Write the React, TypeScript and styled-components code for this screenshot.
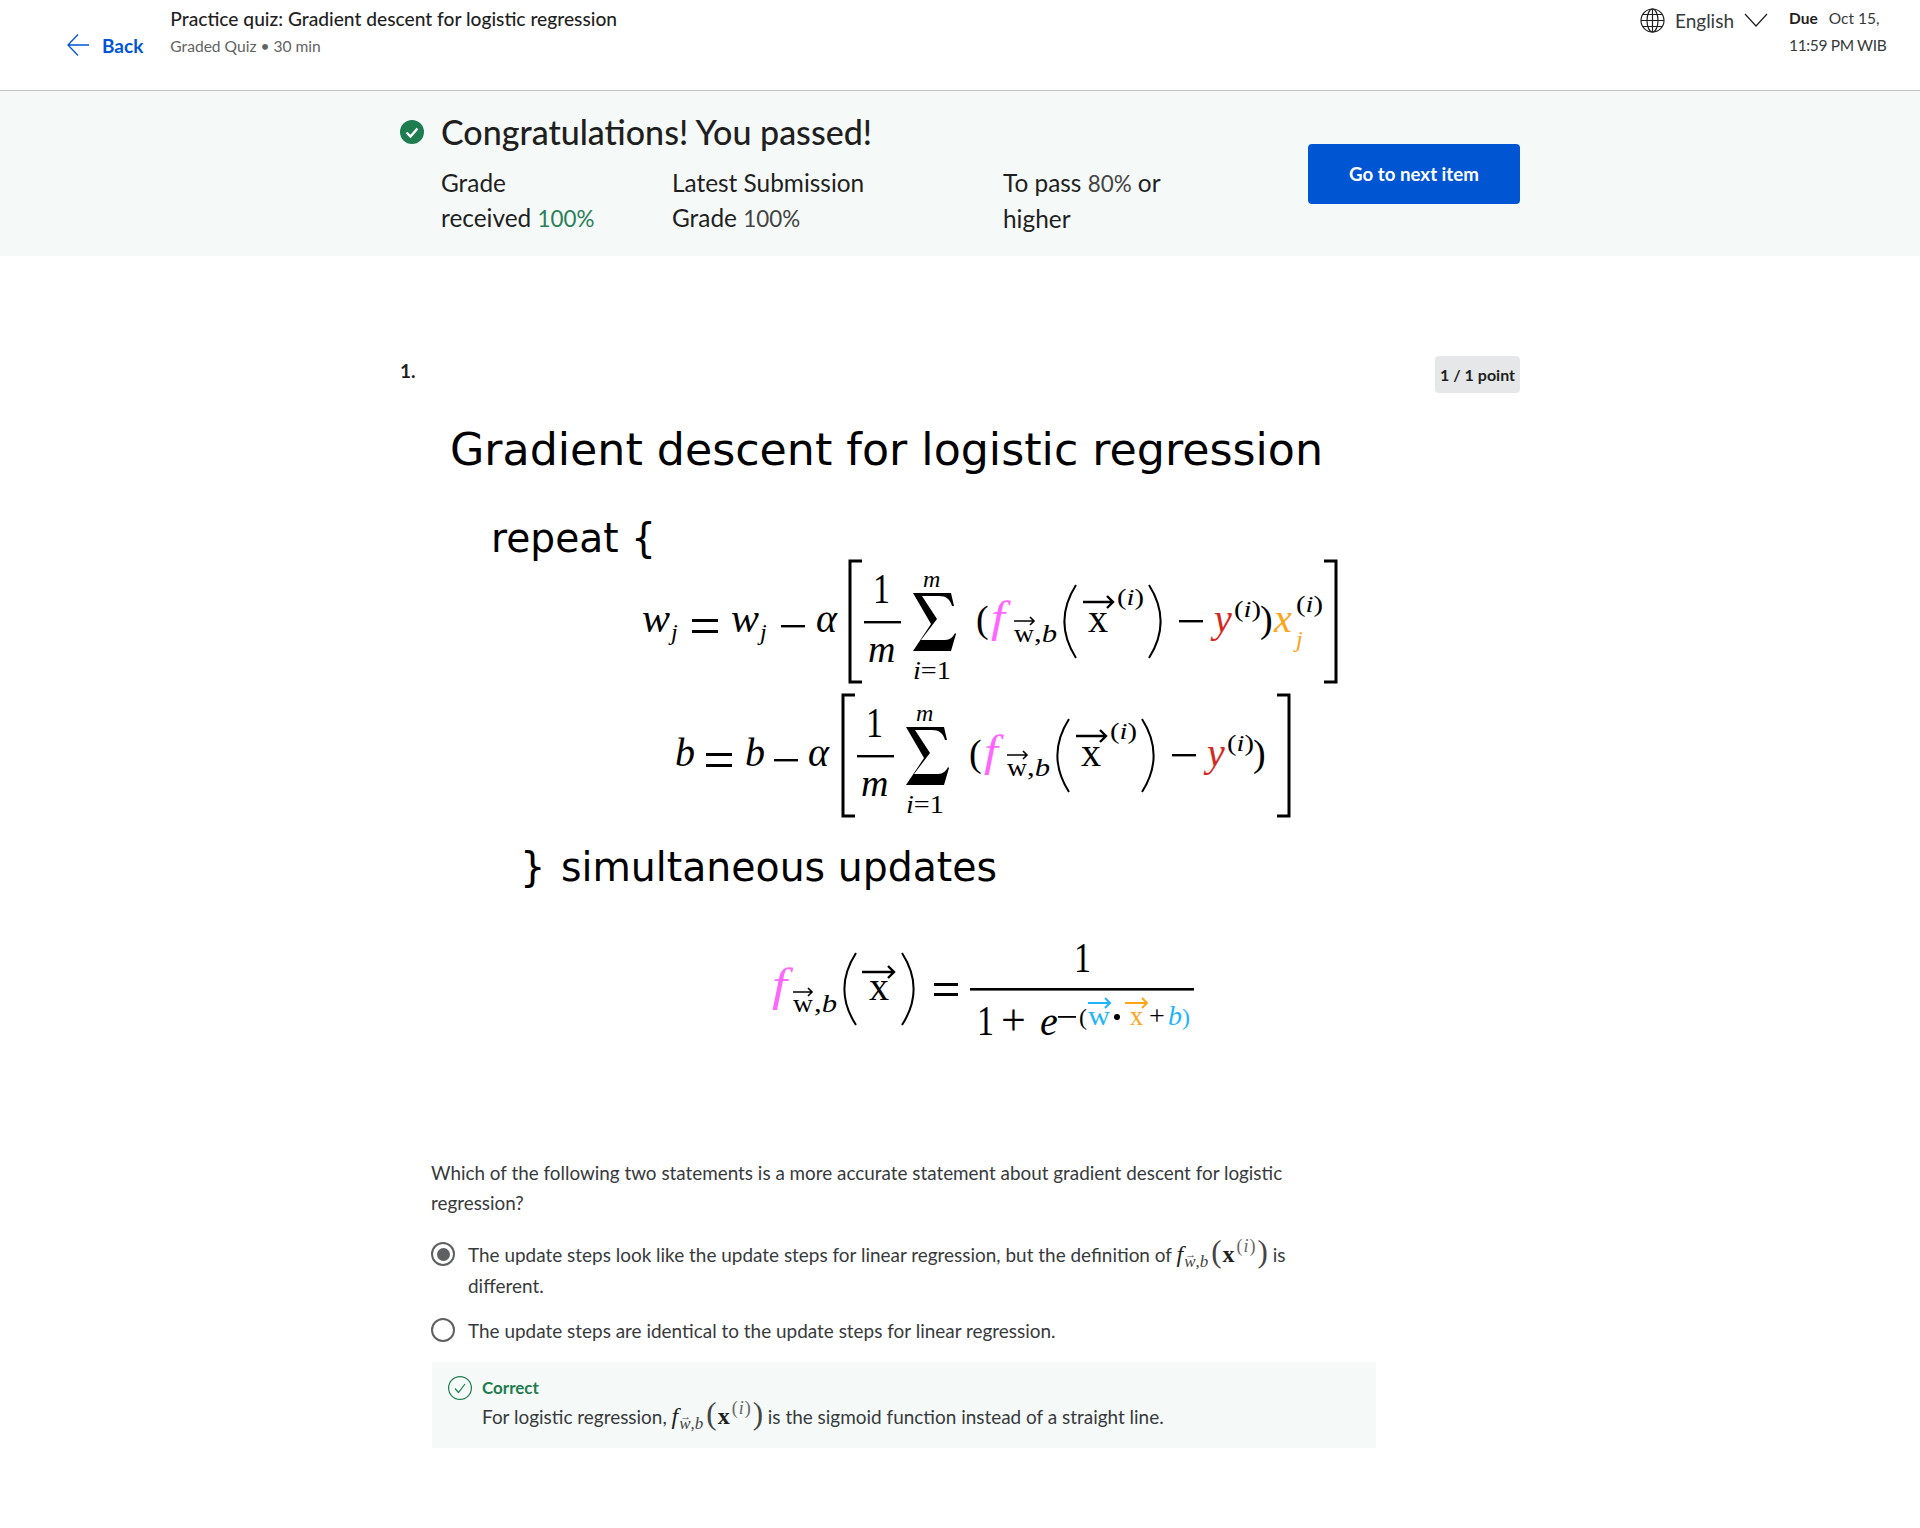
import React from "react";
import styled, { createGlobalStyle } from "styled-components";

const Global = createGlobalStyle`
  html, body { margin: 0; padding: 0; background: #fff; }
  body { font-family: "Lato", "Noto Sans", sans-serif; color: #1f1f1f; }
  * { box-sizing: border-box; }
`;

const Page = styled.div`
  width: 1920px;
  height: 1528px;
  overflow: hidden;
  background: #fff;
`;

const Header = styled.header`
  display: flex;
  height: 91px;
  border-bottom: 1px solid #c1c5c8;
  padding-left: 67px;
`;

const BackLink = styled.a`
  display: flex;
  align-items: center;
  gap: 13px;
  height: 24px;
  margin-top: 33px;
  color: #0056d2;
  font-size: 19px;
  font-weight: 700;
`;

const TitleBlock = styled.div`
  margin-left: 27px;
  flex: 1;
  padding-top: 7px;
`;

const Title = styled.div`
  font-size: 19.2px;
  font-weight: 500;
  line-height: 24px;
  color: #1f1f1f;
`;

const Sub = styled.div`
  font-size: 15.6px;
  line-height: 24px;
  margin-top: 3px;
  color: #636363;
`;

const LangPicker = styled.div`
  display: flex;
  align-items: center;
  height: 26px;
  margin: 7px 0 0 -2px;
  color: #373a3c;
  font-size: 19px;
`;

const LangName = styled.span`
  margin: 0 10px 0 10px;
`;

const Due = styled.div`
  width: 131px;
  margin-left: 21px;
  padding-top: 5px;
  font-size: 15.5px;
  line-height: 27px;
  white-space: nowrap;
  color: #373a3c;
`;

const DueLabel = styled.b`
  font-weight: 700;
  color: #1f1f1f;
  margin-right: 11px;
`;

const DueTime = styled.span`
  letter-spacing: -0.35px;
`;

const Banner = styled.section`
  height: 165px;
  background: #f5f9f8;
`;

const BannerInner = styled.div`
  width: 1120px;
  margin: 0 auto;
  display: flex;
  justify-content: space-between;
`;

const Pass = styled.div`
  padding-top: 21px;
`;

const PassHead = styled.h1`
  display: flex;
  align-items: center;
  gap: 17px;
  margin: 0;
  font-size: 34px;
  line-height: 40px;
  font-weight: 500;
  color: #1f1f1f;
`;

const Stats = styled.div`
  display: flex;
  margin-top: 13px;
  padding-left: 41px;
`;

const Stat = styled.div<{ $w: number }>`
  width: ${(p) => p.$w}px;
  font-size: 24.4px;
  line-height: 35px;
  white-space: nowrap;
  color: #1f1f1f;
`;

const Pct = styled.span<{ $good?: boolean }>`
  font-size: 22.4px;
  font-weight: 400;
  color: ${(p) => (p.$good ? "#2a8058" : "#444")};
`;

const NextButton = styled.button`
  width: 212px;
  height: 60px;
  margin-top: 53px;
  border: 0;
  border-radius: 4px;
  background: #0056d2;
  color: #fff;
  font: 700 18.7px "Lato", sans-serif;
`;

const Main = styled.main`
  width: 1120px;
  margin: 0 auto;
  padding-top: 100px;
`;

const QuestionHead = styled.div`
  display: flex;
  justify-content: space-between;
`;

const QNum = styled.div`
  font-size: 19px;
  font-weight: 700;
  line-height: 30px;
`;

const Points = styled.div`
  height: 37px;
  padding: 0 5px;
  display: flex;
  align-items: center;
  border-radius: 4px;
  background: #e5e7e8;
  font-size: 16px;
  font-weight: 700;
`;

const Figure = styled.svg`
  display: block;
  margin: 17px 0 0 40px;
`;

const MathText = styled.text<{ $italic?: boolean; $c?: string; $s?: number }>`
  font-family: "Liberation Serif", serif;
  font-style: ${(p) => (p.$italic ? "italic" : "normal")};
  font-size: ${(p) => p.$s ?? 40}px;
  fill: ${(p) => p.$c ?? "#000"};
`;

const SansText = styled.text`
  font-family: "DejaVu Sans", sans-serif;
  fill: #000;
`;

const Prose = styled.div`
  margin: 98px 0 0 31px;
  width: 945px;
  font-size: 18.95px;
  line-height: 30px;
  color: #373a3c;
`;

const Question = styled.div`
  width: 870px;
  font-size: 18.87px;
`;

const Options = styled.div`
  margin-top: 21px;
  display: flex;
  flex-direction: column;
  gap: 14px;
`;

const Option = styled.div`
  display: flex;
  gap: 13px;
`;

const OptionText = styled.span`
  width: 830px;
  line-height: 31px;
`;

const Radio = styled.span<{ $on?: boolean }>`
  flex: none;
  width: 24px;
  height: 24px;
  margin-top: 3px;
  border-radius: 50%;
  border: 2.5px solid #5e6062;
  display: flex;
  align-items: center;
  justify-content: center;
  &::after {
    content: "";
    width: 13px;
    height: 13px;
    border-radius: 50%;
    background: ${(p) => (p.$on ? "#5e6062" : "transparent")};
  }
`;

const Feedback = styled.div`
  margin: 16px 0 0 1px;
  width: 944px;
  height: 86px;
  background: #f5f9f8;
  padding: 14px 16px;
  display: flex;
  gap: 10px;
`;

const FeedbackBody = styled.div`
  color: #373a3c;
`;

const CorrectLabel = styled.div`
  color: #1d7c50;
  font-size: 17px;
  font-weight: 700;
  line-height: 24px;
`;

const FeedbackText = styled.div`
  line-height: 30px;
  margin-top: 2px;
`;

const Inline = styled.span`
  font-family: "Liberation Serif", serif;
  font-size: 24px;
  color: #1f1f1f;
  white-space: nowrap;
  line-height: 0;
`;

const InlineVar = styled.i`
  margin-right: 1px;
`;

const InlineSub = styled.span`
  font-size: 17px;
  color: #444;
  vertical-align: -5px;
  line-height: 0;
  margin-right: 3px;
`;

const InlineVec = styled.i`
  position: relative;
  display: inline-block;
  line-height: 0;
  &::before {
    content: "→";
    position: absolute;
    left: 1px;
    top: -8px;
    font-size: 11px;
    font-style: normal;
  }
`;

const InlineSup = styled.span`
  font-size: 18px;
  font-weight: 300;
  color: #666;
  vertical-align: 10px;
  line-height: 0;
  letter-spacing: 1px;
  margin: 0 1px;
`;

const InlineBold = styled.b`
  margin: 0 1px;
`;

const InlineParen = styled.span`
  font-size: 31px;
  font-weight: 300;
  color: #444;
`;

function InlineFormula() {
  return (
    <Inline>
      <InlineVar>f</InlineVar>
      <InlineSub>
        <InlineVec>w</InlineVec>,<i>b</i>
      </InlineSub>
      <InlineParen>(</InlineParen>
      <InlineBold>x</InlineBold>
      <InlineSup>
        (<i>i</i>)
      </InlineSup>
      <InlineParen>)</InlineParen>
    </Inline>
  );
}

const PINK = "#ff66ff";
const RED = "#d42a1e";
const ORANGE = "#ffa319";
const BLUE = "#1fb4ff";

function M(p: { x: number; y: number; s?: number; i?: boolean; c?: string; w?: number; children: React.ReactNode }) {
  return (
    <MathText
      x={p.x}
      y={p.y}
      $s={p.s}
      $italic={p.i}
      $c={p.c}
      {...(p.w ? { textLength: p.w, lengthAdjust: "spacingAndGlyphs" } : {})}
    >
      {p.children}
    </MathText>
  );
}

function Arrow({ x1, x2, y, c = "#000", sw = 2, head = 5 }: { x1: number; x2: number; y: number; c?: string; sw?: number; head?: number }) {
  return (
    <path
      d={`M${x1} ${y}H${x2}M${x2 - head} ${y - head}L${x2} ${y}L${x2 - head} ${y + head}`}
      fill="none"
      stroke={c}
      strokeWidth={sw}
    />
  );
}

function Paren({ x, y1, y2, dir, w = 15, sw = 2 }: { x: number; y1: number; y2: number; dir: 1 | -1; w?: number; sw?: number }) {
  const xEnd = dir === 1 ? x + w : x;
  const xMid = dir === 1 ? x : x + w;
  const my = (y1 + y2) / 2;
  return <path d={`M${xEnd} ${y1}Q${xMid - dir * w * 0.55} ${my} ${xEnd} ${y2}`} fill="none" stroke="#000" strokeWidth={sw} />;
}

function Sigma({ x, y }: { x: number; y: number }) {
  return (
    <path
      d={`M${x} ${y}H${x + 38}L${x + 41} ${y + 13}H${x + 39}C${x + 37} ${y + 6} ${x + 33} ${y + 3} ${x + 26} ${y + 3}H${x + 9}L${x + 24} ${y + 26}L${x + 8} ${y + 47}H${x + 32}C${x + 37} ${y + 47} ${x + 40} ${y + 44} ${x + 42} ${y + 40}L${x + 43} ${y + 41}L${x + 38} ${y + 58}H${x}L${x + 18} ${y + 31}Z`}
      fill="#000"
    />
  );
}

function Bracket({ x, y1, y2, dir }: { x: number; y1: number; y2: number; dir: 1 | -1 }) {
  const w = 12 * dir;
  return <path d={`M${x + w} ${y1}H${x}V${y2}H${x + w}`} fill="none" stroke="#000" strokeWidth={3} />;
}

/* the summation block shared by both update rules; dx/dy shift it from the first rule */
function SumBody({ dx, dy }: { dx: number; dy: number }) {
  const X = (v: number) => v + dx;
  const Y = (v: number) => v + dy;
  return (
    <>
      <M x={X(873)} y={Y(603)} s={42} w={17}>1</M>
      <rect x={X(864)} y={Y(621)} width={37} height={2.4} fill="#000" />
      <M x={X(868)} y={Y(662)} i s={38}>m</M>
      <Sigma x={X(913)} y={Y(593)} />
      <M x={X(923)} y={Y(587)} i s={24}>m</M>
      <M x={X(913)} y={Y(679)} s={26} w={38}>
        <tspan fontStyle="italic">i</tspan>=1
      </M>
      <M x={X(976)} y={Y(632)} s={38}>(</M>
      <M x={X(991)} y={Y(632)} i c={PINK} s={44} w={14}>f</M>
      <Arrow x1={X(1014)} x2={X(1034)} y={Y(621)} sw={1.6} head={4} />
      <M x={X(1014)} y={Y(642)} s={26} w={20}>w</M>
      <M x={X(1034)} y={Y(642)} s={26} w={23}>
        ,<tspan fontStyle="italic">b</tspan>
      </M>
      <Paren x={X(1061)} y1={Y(585)} y2={Y(658)} dir={1} />
      <Arrow x1={X(1083)} x2={X(1113)} y={Y(602)} sw={2.4} head={6} />
      <M x={X(1088)} y={Y(632)} s={40}>x</M>
      <M x={X(1117)} y={Y(605)} s={24} w={27}>
        (<tspan fontStyle="italic">i</tspan>)
      </M>
      <Paren x={X(1149)} y1={Y(585)} y2={Y(658)} dir={-1} />
      <rect x={X(1179)} y={Y(620)} width={24} height={2.4} fill="#000" />
      <M x={X(1214)} y={Y(632)} i c={RED} s={40}>y</M>
      <M x={X(1234)} y={Y(617)} s={24} w={27}>
        (<tspan fontStyle="italic">i</tspan>)
      </M>
      <M x={X(1260)} y={Y(632)} s={38}>)</M>
    </>
  );
}

function Equations() {
  return (
    <Figure width={960} height={650} viewBox="440 410 960 650" role="img" aria-label="Gradient descent for logistic regression">
      <SansText x={450} y={465} fontSize={44} textLength={873} lengthAdjust="spacingAndGlyphs">
        Gradient descent for logistic regression
      </SansText>
      <SansText x={491} y={552} fontSize={40} textLength={165} lengthAdjust="spacingAndGlyphs">
        repeat {"{"}
      </SansText>

      <M x={642} y={632} i s={42}>w</M>
      <M x={671} y={640} i s={24}>j</M>
      <rect x={692} y={619} width={26} height={3} fill="#000" />
      <rect x={692} y={630} width={26} height={3} fill="#000" />
      <M x={731} y={632} i s={42}>w</M>
      <M x={760} y={640} i s={24}>j</M>
      <rect x={781} y={625} width={24} height={2.4} fill="#000" />
      <M x={816} y={632} i s={40}>α</M>
      <Bracket x={850} y1={561} y2={682} dir={1} />
      <SumBody dx={0} dy={0} />
      <M x={1274} y={632} i c={ORANGE} s={40}>x</M>
      <M x={1296} y={612} s={24} w={27}>
        (<tspan fontStyle="italic">i</tspan>)
      </M>
      <M x={1296} y={647} i c={ORANGE} s={24}>j</M>
      <Bracket x={1336} y1={561} y2={682} dir={-1} />

      <M x={675} y={766} i s={40}>b</M>
      <rect x={706} y={753} width={26} height={3} fill="#000" />
      <rect x={706} y={764} width={26} height={3} fill="#000" />
      <M x={745} y={766} i s={40}>b</M>
      <rect x={774} y={759} width={24} height={2.4} fill="#000" />
      <M x={808} y={766} i s={40}>α</M>
      <Bracket x={843} y1={695} y2={816} dir={1} />
      <SumBody dx={-7} dy={134} />
      <Bracket x={1289} y1={695} y2={816} dir={-1} />

      <SansText x={520} y={881} fontSize={40}>{"}"}</SansText>
      <SansText x={561} y={881} fontSize={40} textLength={436} lengthAdjust="spacingAndGlyphs">
        simultaneous updates
      </SansText>

      <M x={772} y={1000} i c={PINK} s={46} w={15}>f</M>
      <Arrow x1={793} x2={812} y={992} sw={1.6} head={4} />
      <M x={793} y={1012} s={26} w={20}>w</M>
      <M x={814} y={1012} s={26} w={23}>
        ,<tspan fontStyle="italic">b</tspan>
      </M>
      <Paren x={841} y1={953} y2={1025} dir={1} />
      <Arrow x1={862} x2={894} y={972} sw={2.4} head={6} />
      <M x={869} y={1000} s={40}>x</M>
      <Paren x={902} y1={953} y2={1025} dir={-1} />
      <rect x={934} y={983} width={24} height={3} fill="#000" />
      <rect x={934} y={993} width={24} height={3} fill="#000" />
      <M x={1074} y={972} s={42} w={17}>1</M>
      <rect x={970} y={988} width={224} height={2.6} fill="#000" />
      <M x={977} y={1035} s={42} w={17}>1</M>
      <M x={1001} y={1035} s={44}>+</M>
      <M x={1040} y={1035} i s={40}>e</M>
      <rect x={1058} y={1016} width={18} height={1.8} fill="#000" />
      <M x={1079} y={1025} s={24} c="#000">(</M>
      <Arrow x1={1088} x2={1110} y={1003} c={BLUE} sw={2} head={5} />
      <M x={1088} y={1025} s={28} c={BLUE} w={22}>w</M>
      <circle cx={1117} cy={1017} r={3} fill="#000" />
      <Arrow x1={1125} x2={1147} y={1003} c={ORANGE} sw={2} head={5} />
      <M x={1130} y={1025} s={28} c={ORANGE} w={13}>x</M>
      <M x={1149} y={1025} s={28}>+</M>
      <M x={1168} y={1025} i s={28} c={BLUE}>b</M>
      <M x={1182} y={1025} s={24} c={BLUE}>)</M>
    </Figure>
  );
}

export default function App() {
  return (
    <Page>
      <Global />
      <Header>
        <BackLink>
          <svg width="22" height="24" viewBox="0 0 22 24" fill="none" stroke="#0056d2" strokeWidth="1.3">
            <path d="M22 12H1M11 1.5L1 12l10 10.5" />
          </svg>
          Back
        </BackLink>
        <TitleBlock>
          <Title>Practice quiz: Gradient descent for logistic regression</Title>
          <Sub>Graded Quiz • 30 min</Sub>
        </TitleBlock>
        <LangPicker>
          <svg width="25" height="25" viewBox="0 0 25 25" fill="none" stroke="#1f1f1f" strokeWidth="1.2">
            <circle cx="12.5" cy="12.5" r="11.5" />
            <ellipse cx="12.5" cy="12.5" rx="5.5" ry="11.5" />
            <path d="M12.5 1v23M1 12.5h23M2.8 6.5h19.4M2.8 18.5h19.4" />
          </svg>
          <LangName>English</LangName>
          <svg width="24" height="14" viewBox="0 0 24 14" fill="none" stroke="#1f1f1f" strokeWidth="1.2">
            <path d="M1 1l11 12L23 1" />
          </svg>
        </LangPicker>
        <Due>
          <DueLabel>Due</DueLabel>Oct 15,
          <br />
          <DueTime>11:59 PM WIB</DueTime>
        </Due>
      </Header>

      <Banner>
        <BannerInner>
          <Pass>
            <PassHead>
              <svg width="24" height="24" viewBox="0 0 24 24">
                <circle cx="12" cy="12" r="12" fill="#1d7c50" />
                <path d="M6.5 12.5l4 4 7-8" fill="none" stroke="#fff" strokeWidth="2.4" />
              </svg>
              Congratulations! You passed!
            </PassHead>
            <Stats>
              <Stat $w={231}>
                Grade
                <br />
                received <Pct $good>100%</Pct>
              </Stat>
              <Stat $w={331}>
                Latest Submission
                <br />
                Grade <Pct>100%</Pct>
              </Stat>
              <Stat $w={190}>
                To pass <Pct>80%</Pct> or
                <br />
                higher
              </Stat>
            </Stats>
          </Pass>
          <NextButton>Go to next item</NextButton>
        </BannerInner>
      </Banner>

      <Main>
        <QuestionHead>
          <QNum>1.</QNum>
          <Points>1 / 1 point</Points>
        </QuestionHead>
        <Equations />
        <Prose>
          <Question>Which of the following two statements is a more accurate statement about gradient descent for logistic regression?</Question>
          <Options>
            <Option>
              <Radio $on />
              <OptionText>
                The update steps look like the update steps for linear regression, but the definition of <InlineFormula /> is different.
              </OptionText>
            </Option>
            <Option>
              <Radio />
              <OptionText>The update steps are identical to the update steps for linear regression.</OptionText>
            </Option>
          </Options>
          <Feedback>
            <svg width="24" height="24" viewBox="0 0 24 24" fill="none" stroke="#1d7c50" strokeWidth="1.2">
              <circle cx="12" cy="12" r="11.4" />
              <path d="M7 12.5l3.5 4L17 8" />
            </svg>
            <FeedbackBody>
              <CorrectLabel>Correct</CorrectLabel>
              <FeedbackText>
                For logistic regression, <InlineFormula /> is the sigmoid function instead of a straight line.
              </FeedbackText>
            </FeedbackBody>
          </Feedback>
        </Prose>
      </Main>
    </Page>
  );
}
